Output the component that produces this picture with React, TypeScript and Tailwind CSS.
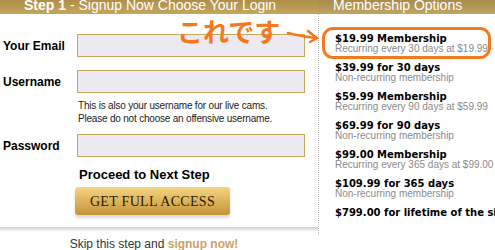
const plans = [
  { title: '$19.99 Membership', sub: 'Recurring every 30 days at $19.99' },
  { title: '$39.99 for 30 days', sub: 'Non-recurring membership' },
  { title: '$59.99 Membership', sub: 'Recurring every 90 days at $59.99' },
  { title: '$69.99 for 90 days', sub: 'Non-recurring membership' },
  { title: '$99.00 Membership', sub: 'Recurring every 365 days at $99.00' },
  { title: '$109.99 for 365 days', sub: 'Non-recurring membership' },
  { title: '$799.00 for lifetime of the site', sub: '' },
];

function Field({ label, id }: { label: string; id: string }) {
  return (
    <div className="flex items-center">
      <label
        htmlFor={id}
        className="w-[77px] pl-[3px] text-[12px] font-bold text-black"
      >
        {label}
      </label>
      <input
        id={id}
        type="text"
        className="h-[23px] w-[228px] border border-[#c9a55a] bg-[#ece9f0] outline-none"
      />
    </div>
  );
}

export default function App() {
  return (
    <div className="relative h-[250px] w-[495px] overflow-hidden bg-white font-['Liberation_Sans',Arial,sans-serif]">
      <div className="flex h-[14px] overflow-hidden">
        <div className="w-[318px] bg-gradient-to-b from-[#b08f48] to-[#c4a65e] pl-[24px]">
          <p className="-mt-[2px] whitespace-nowrap text-[14px] leading-[14px] text-white">
            <b>Step 1</b> - Signup Now Choose Your Login
          </p>
        </div>
        <div className="flex-1 bg-gradient-to-b from-[#a88c4c] to-[#c0a462] pl-[15px]">
          <p className="-mt-[2px] whitespace-nowrap text-[14px] leading-[14px] text-white">
            Membership Options
          </p>
        </div>
      </div>

      <div className="flex">
        <div className="w-[318px]">
          <div className="flex flex-col pt-[20px]">
            <Field label="Your Email" id="email" />
            <div className="mt-[13px]">
              <Field label="Username" id="username" />
            </div>
            <p className="mt-[6px] pl-[78px] text-[10px] leading-[13px] tracking-[-0.2px] text-[#222]">
              This is also your username for our live cams.
              <br />
              Please do not choose an offensive username.
            </p>
            <div className="mt-[9px]">
              <Field label="Password" id="password" />
            </div>
            <p className="mt-[10px] pl-[79px] text-[13px] font-bold leading-[16px] text-black">
              Proceed to Next Step
            </p>
            <div className="mt-[4px] pl-[75px]">
              <button
                type="button"
                className="h-[28px] w-[155px] rounded-[3px] bg-gradient-to-b from-[#f4d683] via-[#deb35a] to-[#c39538] font-['Liberation_Serif',serif] text-[14px] tracking-[0.3px] text-[#2a1c08] shadow-[0_3px_3px_rgba(0,0,0,0.15)]"
              >
                GET FULL ACCESS
              </button>
            </div>
            <div className="mt-[12px] h-[5px] bg-gradient-to-b from-[#d0d0d0] to-white" />
            <p className="mt-[5px] pr-[10px] text-center text-[12px] leading-[14px] text-[#333]">
              Skip this step and{' '}
              <span className="font-bold text-[#c8a462]">signup now!</span>
            </p>
          </div>
        </div>

        <div className="h-[221px] flex-1 overflow-hidden border-l border-dotted border-[#b8b8b8] pl-[16px] pt-[19px]">
          {plans.map((plan) => (
            <div key={plan.title} className="mb-[8px] whitespace-nowrap">
              <p className="font-['DejaVu_Sans',Verdana,sans-serif] text-[10px] font-bold leading-[11px] text-black">
                {plan.title}
              </p>
              {plan.sub && (
                <p className="text-[10px] leading-[10px] text-[#8a8a8a]">
                  {plan.sub}
                </p>
              )}
            </div>
          ))}
        </div>
      </div>

      <div className="pointer-events-none absolute left-[322px] top-[27px] h-[32px] w-[169px] rounded-[11px] border-[3px] border-[#f5781e]" />
      <p className="pointer-events-none absolute left-[177px] top-[14px] font-['Noto_Sans_CJK_JP',sans-serif] text-[26px] font-bold leading-[34px] text-[#f5781e]">
        これです
      </p>
      <svg
        className="pointer-events-none absolute left-[286px] top-[28px]"
        width="34"
        height="16"
        viewBox="0 0 34 16"
        fill="none"
        stroke="#f5781e"
        strokeWidth="2.5"
        strokeLinecap="round"
      >
        <path d="M2 5 Q14 8 30 10" />
        <path d="M22 3 L31 10 L24 14" />
      </svg>
    </div>
  );
}
